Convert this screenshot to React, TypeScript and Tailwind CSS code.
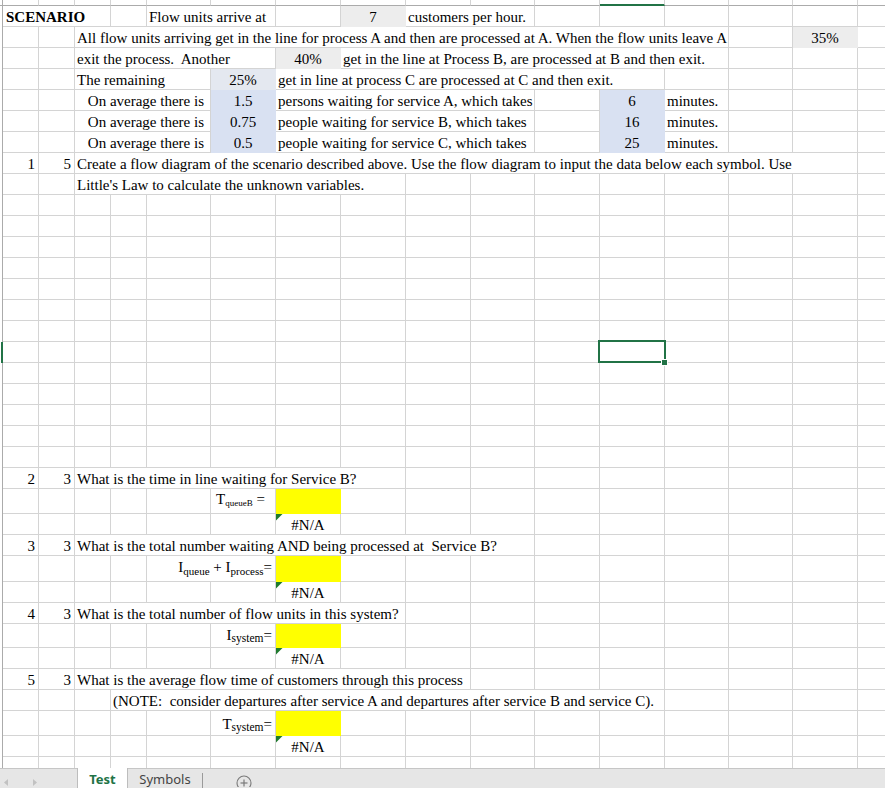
import React from 'react';

type Cell = {
  s?: number;
  t?: React.ReactNode;
  a?: 'l' | 'r' | 'c';
  f?: string;
  cls?: string;
  tri?: boolean;
  sel?: boolean;
};

const SPAN: Record<number, string> = {
  1: 'col-span-1',
  2: 'col-span-2',
  3: 'col-span-3',
  4: 'col-span-4',
  5: 'col-span-5',
  6: 'col-span-6',
  7: 'col-span-7',
  8: 'col-span-8',
  9: 'col-span-9',
  10: 'col-span-10',
  11: 'col-span-11',
  12: 'col-span-12',
  13: 'col-span-13',
  14: 'col-span-14',
  15: 'col-span-15',
  16: 'col-span-16',
};

const G = 'bg-[#ededed] border-[#ededed]';
const B = 'bg-[#d9e1f2] border-[#d9e1f2]';
const B2 = 'bg-[#e4e8f0] border-[#e4e8f0]';
const Y = 'bg-[#ffff00] border-[#ffff00]';

const GRID =
  'grid grid-cols-[36px_36px_36px_36px_64px_65px_65px_65px_65px_64px_65px_65px_64px_64px_65px_64px]';

function fill(cells: Cell[]): Cell[] {
  const used = cells.reduce((n, c) => n + (c.s ?? 1), 0);
  const out = [...cells];
  for (let i = used; i < 16; i++) out.push({});
  return out;
}

function SheetRow({
  cells,
  h = 'h-[21px]',
  pb = 'pb-0',
  selRow = false,
}: {
  cells: Cell[];
  h?: string;
  pb?: string;
  selRow?: boolean;
}) {
  const all = fill(cells);
  return (
    <div className="flex">
      {selRow ? (
        <div className={`w-[3px] shrink-0 border-r-2 border-[#217346] ${h}`} />
      ) : (
        <div className={`w-[3px] shrink-0 border-r border-[#ababab] ${h}`} />
      )}
      <div className={`${GRID} ${h}`}>
        {all.map((c, i) => {
          const align =
            c.a === 'r'
              ? 'justify-end pr-[3px]'
              : c.a === 'c'
              ? 'justify-center'
              : 'justify-start pl-[2px]';
          return (
            <div
              key={i}
              className={`relative flex items-end whitespace-pre border-r border-b ${
                c.f ?? 'border-[#d4d4d4]'
              } ${SPAN[c.s ?? 1]} ${align} ${pb} ${c.cls ?? ''}`}
            >
              {c.t !== undefined && <span className="leading-[17px]">{c.t}</span>}
              {c.tri && (
                <svg className="absolute left-0 top-0" width="7" height="7" viewBox="0 0 7 7">
                  <polygon points="0,0 6.5,0 0,6.5" fill="#1f7a2e" />
                </svg>
              )}
              {c.sel && (
                <>
                  <div className="absolute -left-[2px] -top-[2px] w-[68px] h-[23px] border-2 border-[#217346]" />
                  <div className="absolute left-[61px] top-[17px] w-[7px] h-[7px] bg-[#217346] border border-white" />
                </>
              )}
            </div>
          );
        })}
      </div>
    </div>
  );
}

function Sub({ children, size, off }: { children: React.ReactNode; size: string; off: string }) {
  return <span className={`relative ${size} ${off}`}>{children}</span>;
}

export default function App() {
  const empty = (n: number, selIndex = -1) =>
    Array.from({ length: n }).map((_, i) =>
      i === selIndex ? (
        <SheetRow
          key={`e${i}`}
          selRow
          cells={[{}, {}, {}, {}, {}, {}, {}, {}, {}, {}, {}, { sel: true, cls: 'z-10' }]}
        />
      ) : (
        <SheetRow key={`e${i}`} cells={[]} />
      )
    );

  return (
    <div className="w-[885px] h-[788px] overflow-hidden bg-white flex flex-col font-['Liberation_Serif','Times_New_Roman',serif] text-[15px] text-black">
      <div className="flex-1 overflow-hidden">
        {/* column header remnant */}
        <div className="flex">
          <div className="w-[3px] h-[6px] shrink-0 border-r border-b border-[#ababab]" />
          <div className={`${GRID} h-[6px]`}>
            {Array.from({ length: 16 }).map((_, i) =>
              i === 11 ? (
                <div key={i} className="border-r border-r-[#d4d4d4] border-b-2 border-b-[#217346]" />
              ) : (
                <div key={i} className="border-r border-r-[#d4d4d4] border-b border-b-[#ababab]" />
              )
            )}
          </div>
        </div>

        <SheetRow
          cells={[
            { s: 3, t: 'SCENARIO', cls: 'font-bold pl-[3px]' },
            {},
            { s: 2, t: 'Flow units arrive at' },
            {},
            { t: '7', a: 'c', f: G },
            { s: 2, t: 'customers per hour.' },
          ]}
        />
        <SheetRow
          cells={[
            {},
            {},
            {
              s: 11,
              t: 'All flow units arriving get in the line for process A and then are processed at A. When the flow units leave A',
            },
            {},
            { t: '35%', a: 'c', f: G },
          ]}
        />
        <SheetRow
          cells={[
            {},
            {},
            { s: 4, t: 'exit the process.  Another' },
            { t: '40%', a: 'c', f: G },
            { s: 6, t: 'get in the line at Process B, are processed at B and then exit.' },
          ]}
        />
        <SheetRow
          cells={[
            {},
            {},
            { s: 3, t: 'The remaining' },
            { t: '25%', a: 'c', f: B2 },
            { s: 6, t: 'get in line at process C are processed at C and then exit.' },
          ]}
        />
        <SheetRow
          cells={[
            {},
            {},
            { s: 3, t: 'On average there is', a: 'r', cls: 'pr-[6px]' },
            { t: '1.5', a: 'c', f: B },
            { s: 4, t: 'persons waiting for service A, which takes' },
            {},
            { t: '6', a: 'c', f: B },
            { t: 'minutes.' },
          ]}
        />
        <SheetRow
          cells={[
            {},
            {},
            { s: 3, t: 'On average there is', a: 'r', cls: 'pr-[6px]' },
            { t: '0.75', a: 'c', f: B },
            { s: 4, t: 'people waiting for service B, which takes' },
            {},
            { t: '16', a: 'c', f: B },
            { t: 'minutes.' },
          ]}
        />
        <SheetRow
          cells={[
            {},
            {},
            { s: 3, t: 'On average there is', a: 'r', cls: 'pr-[6px]' },
            { t: '0.5', a: 'c', f: B },
            { s: 4, t: 'people waiting for service C, which takes' },
            {},
            { t: '25', a: 'c', f: B },
            { t: 'minutes.' },
          ]}
        />
        <SheetRow
          cells={[
            { t: '1', a: 'r' },
            { t: '5', a: 'r' },
            {
              s: 13,
              t: 'Create a flow diagram of the scenario described above. Use the flow diagram to input the data below each symbol. Use',
            },
          ]}
        />
        <SheetRow cells={[{}, {}, { s: 6, t: "Little's Law to calculate the unknown variables." }]} />

        {empty(13, 7)}

        {/* Question 2 */}
        <SheetRow
          cells={[
            { t: '2', a: 'r' },
            { t: '3', a: 'r' },
            { s: 6, t: 'What is the time in line waiting for Service B?' },
          ]}
        />
        <SheetRow
          h="h-[25px]"
          pb="pb-[3px]"
          cells={[
            {},
            {},
            {},
            {},
            {},
            {
              a: 'r',
              cls: 'pr-[10px]',
              t: (
                <>
                  T
                  <Sub size="text-[9px]" off="top-[2px]">
                    queueB
                  </Sub>{' '}
                  =
                </>
              ),
            },
            { f: Y },
          ]}
        />
        <SheetRow cells={[{}, {}, {}, {}, {}, {}, { t: '#N/A', a: 'c', tri: true }]} />

        {/* Question 3 */}
        <SheetRow
          cells={[
            { t: '3', a: 'r' },
            { t: '3', a: 'r' },
            { s: 8, t: 'What is the total number waiting AND being processed at  Service B?' },
          ]}
        />
        <SheetRow
          h="h-[26px]"
          pb="pb-[4px]"
          cells={[
            {},
            {},
            {},
            {},
            {
              s: 2,
              a: 'r',
              cls: 'pr-[2px]',
              t: (
                <>
                  I
                  <Sub size="text-[11px]" off="top-[3px]">
                    queue
                  </Sub>{' '}
                  + I
                  <Sub size="text-[11px]" off="top-[3px]">
                    process
                  </Sub>
                  =
                </>
              ),
            },
            { f: Y },
          ]}
        />
        <SheetRow cells={[{}, {}, {}, {}, {}, {}, { t: '#N/A', a: 'c', tri: true }]} />

        {/* Question 4 */}
        <SheetRow
          cells={[
            { t: '4', a: 'r' },
            { t: '3', a: 'r' },
            { s: 6, t: 'What is the total number of flow units in this system?' },
          ]}
        />
        <SheetRow
          h="h-[24px]"
          pb="pb-[2px]"
          cells={[
            {},
            {},
            {},
            {},
            {},
            {
              a: 'r',
              cls: 'pr-[2px]',
              t: (
                <>
                  I
                  <Sub size="text-[11.5px]" off="top-[2px]">
                    system
                  </Sub>
                  =
                </>
              ),
            },
            { f: Y },
          ]}
        />
        <SheetRow cells={[{}, {}, {}, {}, {}, {}, { t: '#N/A', a: 'c', tri: true }]} />

        {/* Question 5 */}
        <SheetRow
          cells={[
            { t: '5', a: 'r' },
            { t: '3', a: 'r' },
            { s: 7, t: 'What is the average flow time of customers through this process' },
          ]}
        />
        <SheetRow
          cells={[
            {},
            {},
            {},
            {
              s: 9,
              t: '(NOTE:  consider departures after service A and departures after service B and service C).',
            },
          ]}
        />
        <SheetRow
          h="h-[25px]"
          pb="pb-[1px]"
          cells={[
            {},
            {},
            {},
            {},
            {},
            {
              a: 'r',
              cls: 'pr-[2px]',
              t: (
                <>
                  T
                  <Sub size="text-[11.5px]" off="top-[2px]">
                    system
                  </Sub>
                  =
                </>
              ),
            },
            { f: Y },
          ]}
        />
        <SheetRow cells={[{}, {}, {}, {}, {}, {}, { t: '#N/A', a: 'c', tri: true }]} />
        <SheetRow cells={[]} />
      </div>

      {/* sheet tab bar */}
      <div className="h-[20px] shrink-0 flex bg-[#e6e6e6] border-t border-[#c6c6c6] font-['Noto_Sans','Open_Sans',sans-serif] text-[13px]">
        <div className="w-[77px] shrink-0 flex items-start pt-[10px]">
          <svg className="ml-[4px]" width="4" height="7" viewBox="0 0 4 7">
            <polygon points="4,0 0,3.5 4,7" fill="#c2c2c2" />
          </svg>
          <svg className="ml-[25px]" width="4" height="7" viewBox="0 0 4 7">
            <polygon points="0,0 4,3.5 0,7" fill="#c2c2c2" />
          </svg>
        </div>
        <div className="w-[51px] shrink-0 -mt-px bg-white border-l border-r border-[#bdbdbd] flex justify-center pt-[3px] leading-[16px] font-bold text-[#217346]">
          Test
        </div>
        <div className="w-[74px] shrink-0 flex justify-center pt-[2px] leading-[16px] text-[#444444]">
          Symbols
        </div>
        <div className="w-px shrink-0 mt-[4px] bg-[#9a9a9a]" />
        <div className="ml-[33px] pt-[6px]">
          <svg width="16" height="12" viewBox="0 0 16 12" className="block">
            <circle cx="8" cy="8" r="7" fill="none" stroke="#7a7a7a" strokeWidth="1.1" />
            <line x1="8" y1="4.5" x2="8" y2="11.5" stroke="#7a7a7a" strokeWidth="1.2" />
            <line x1="4.5" y1="8" x2="11.5" y2="8" stroke="#7a7a7a" strokeWidth="1.2" />
          </svg>
        </div>
      </div>
    </div>
  );
}
